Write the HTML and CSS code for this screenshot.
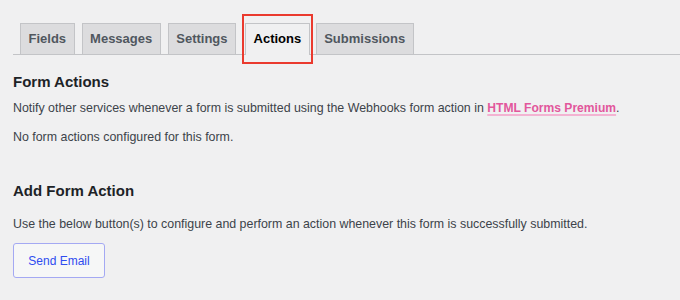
FILE: index.html
```html
<!DOCTYPE html>
<html>
<head>
<meta charset="utf-8">
<link rel="stylesheet" href="styles.css">
</head>
<body>
<div class="wrap">
  <nav class="tabs">
    <a class="tab">Fields</a>
    <a class="tab">Messages</a>
    <a class="tab">Settings</a>
    <a class="tab active">Actions<span class="highlight"></span></a>
    <a class="tab">Submissions</a>
  </nav>
  <h2 class="title first">Form Actions</h2>
  <p class="text notify">Notify other services whenever a form is submitted using the Webhooks form action in <a class="premium">HTML Forms Premium</a>.</p>
  <p class="text none">No form actions configured for this form.</p>
  <h2 class="title second">Add Form Action</h2>
  <p class="text use">Use the below button(s) to configure and perform an action whenever this form is successfully submitted.</p>
  <button class="btn">Send Email</button>
</div>
</body>
</html>
```
FILE: styles.css
```css
html, body {
  margin: 0;
  padding: 0;
  background: #f0f0f1;
}
body {
  font-family: "Liberation Sans", Arial, sans-serif;
  color: #3c434a;
}
.wrap {
  padding: 0 0 0 13px;
}
.tabs {
  display: flex;
  align-items: flex-end;
  gap: 7px;
  padding: 23px 0 0 7px;
  border-bottom: 1px solid #c3c4c7;
}
.tab {
  position: relative;
  display: block;
  box-sizing: border-box;
  height: 31px;
  line-height: 30px;
  padding: 0 7.5px;
  font-size: 13px;
  font-weight: 600;
  color: #50575e;
  background: #dcdcde;
  border: 1px solid #c3c4c7;
  border-bottom: none;
}
.tab.active {
  background: #f0f0f1;
  color: #000;
  height: 32px;
  margin-bottom: -1px;
  margin-left: 2px;
  margin-right: -1px;
}
.highlight {
  position: absolute;
  left: -4px;
  top: -10px;
  width: 71px;
  height: 50px;
  box-sizing: border-box;
  border: 2px solid #ea3a2e;
}
.title {
  margin: 0;
  font-size: 15px;
  line-height: 20px;
  font-weight: 600;
  color: #1d2327;
}
.title.first { margin-top: 17px; }
.title.second { margin-top: 35px; }
.text {
  margin: 0;
  font-size: 12.4px;
  line-height: 18px;
}
.notify { margin-top: 7px; }
.none { margin-top: 11px; }
.use { margin-top: 14px; }
.premium {
  color: #e2579c;
  font-weight: 600;
  font-size: 12.1px;
  text-decoration: underline;
  text-decoration-color: #f3b3d2;
  text-decoration-thickness: 2px;
  text-underline-offset: 2px;
}
.btn {
  display: block;
  margin-top: 10px;
  width: 92px;
  height: 35px;
  padding: 0;
  box-sizing: border-box;
  border: 1px solid #a4a9f3;
  border-radius: 3px;
  background: #f6f7f7;
  color: #2f4cf0;
  font-family: "Liberation Sans", Arial, sans-serif;
  font-size: 12px;
}
```
